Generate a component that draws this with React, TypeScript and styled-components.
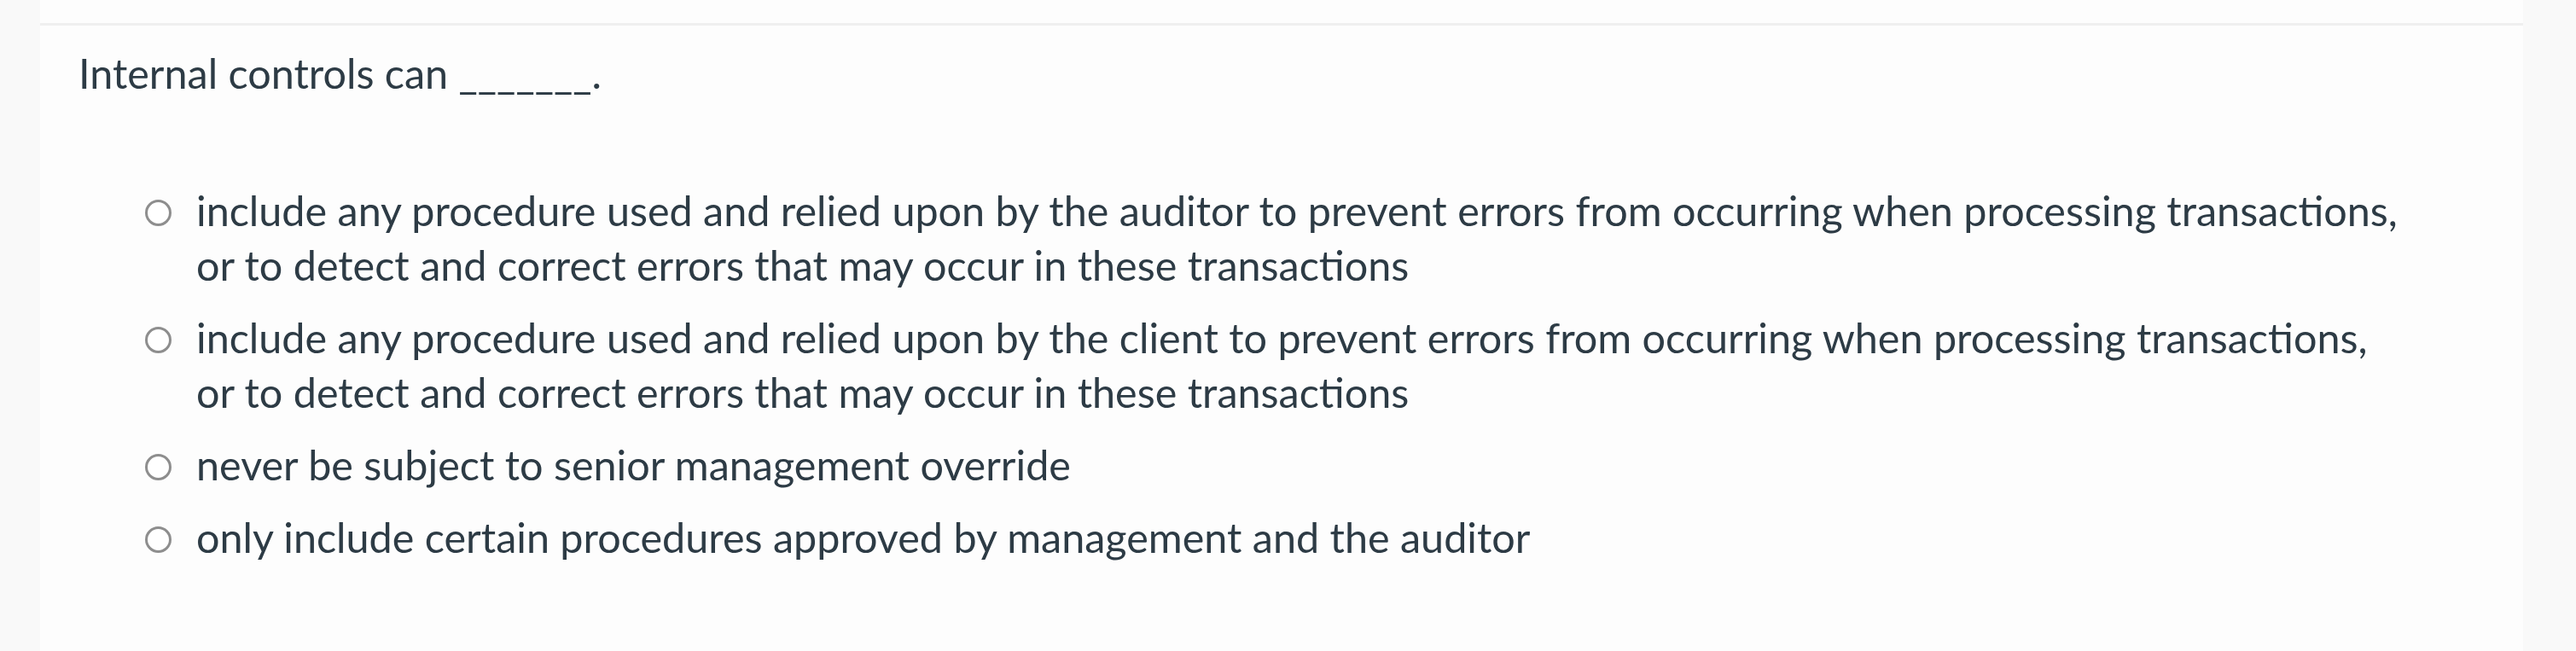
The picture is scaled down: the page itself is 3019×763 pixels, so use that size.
import * as React from 'react';
import styled, { createGlobalStyle } from 'styled-components';

const GlobalStyle = createGlobalStyle`
  html, body {
    margin: 0;
    padding: 0;
    background: #f9f9f9;
  }
  body {
    font-family: Lato, "Open Sans", "Liberation Sans", sans-serif;
    color: #2d3b45;
  }
`;

const Page = styled.div`
  display: flex;
  height: 763px;
  padding: 0 62px 0 47px;
  box-sizing: border-box;
`;

const Panel = styled.div`
  flex: 1;
  background: #fdfdfd;
  padding-top: 27px;
`;

const QuestionBody = styled.div`
  border-top: 3px solid #efefef;
  padding: 23px 0 0 45px;
`;

const QuestionText = styled.div`
  font-size: 48.5px;
  line-height: 64px;
`;

const Answers = styled.ul`
  list-style: none;
  margin: 97px 0 0 0;
  padding: 0 0 0 78px;
  display: flex;
  flex-direction: column;
  gap: 21px;
`;

const Answer = styled.li`
  display: flex;
  align-items: flex-start;
  gap: 29px;
`;

const Radio = styled.span`
  flex: none;
  width: 25px;
  height: 25px;
  margin-top: 20px;
  border: 3px solid #8e8e8e;
  border-radius: 50%;
  background: #fff;
`;

const Label = styled.span`
  font-size: 48.5px;
  line-height: 64px;
`;

const answers: string[][] = [
  [
    'include any procedure used and relied upon by the auditor to prevent errors from occurring when processing transactions,',
    'or to detect and correct errors that may occur in these transactions',
  ],
  [
    'include any procedure used and relied upon by the client to prevent errors from occurring when processing transactions,',
    'or to detect and correct errors that may occur in these transactions',
  ],
  ['never be subject to senior management override'],
  ['only include certain procedures approved by management and the auditor'],
];

export default function App() {
  return (
    <>
      <GlobalStyle />
      <Page>
        <Panel>
          <QuestionBody>
            <QuestionText>Internal controls can _______.</QuestionText>
            <Answers>
              {answers.map((lines, i) => (
                <Answer key={i}>
                  <Radio />
                  <Label>
                    {lines.map((line, j) => (
                      <React.Fragment key={j}>
                        {j > 0 && <br />}
                        {line}
                      </React.Fragment>
                    ))}
                  </Label>
                </Answer>
              ))}
            </Answers>
          </QuestionBody>
        </Panel>
      </Page>
    </>
  );
}
